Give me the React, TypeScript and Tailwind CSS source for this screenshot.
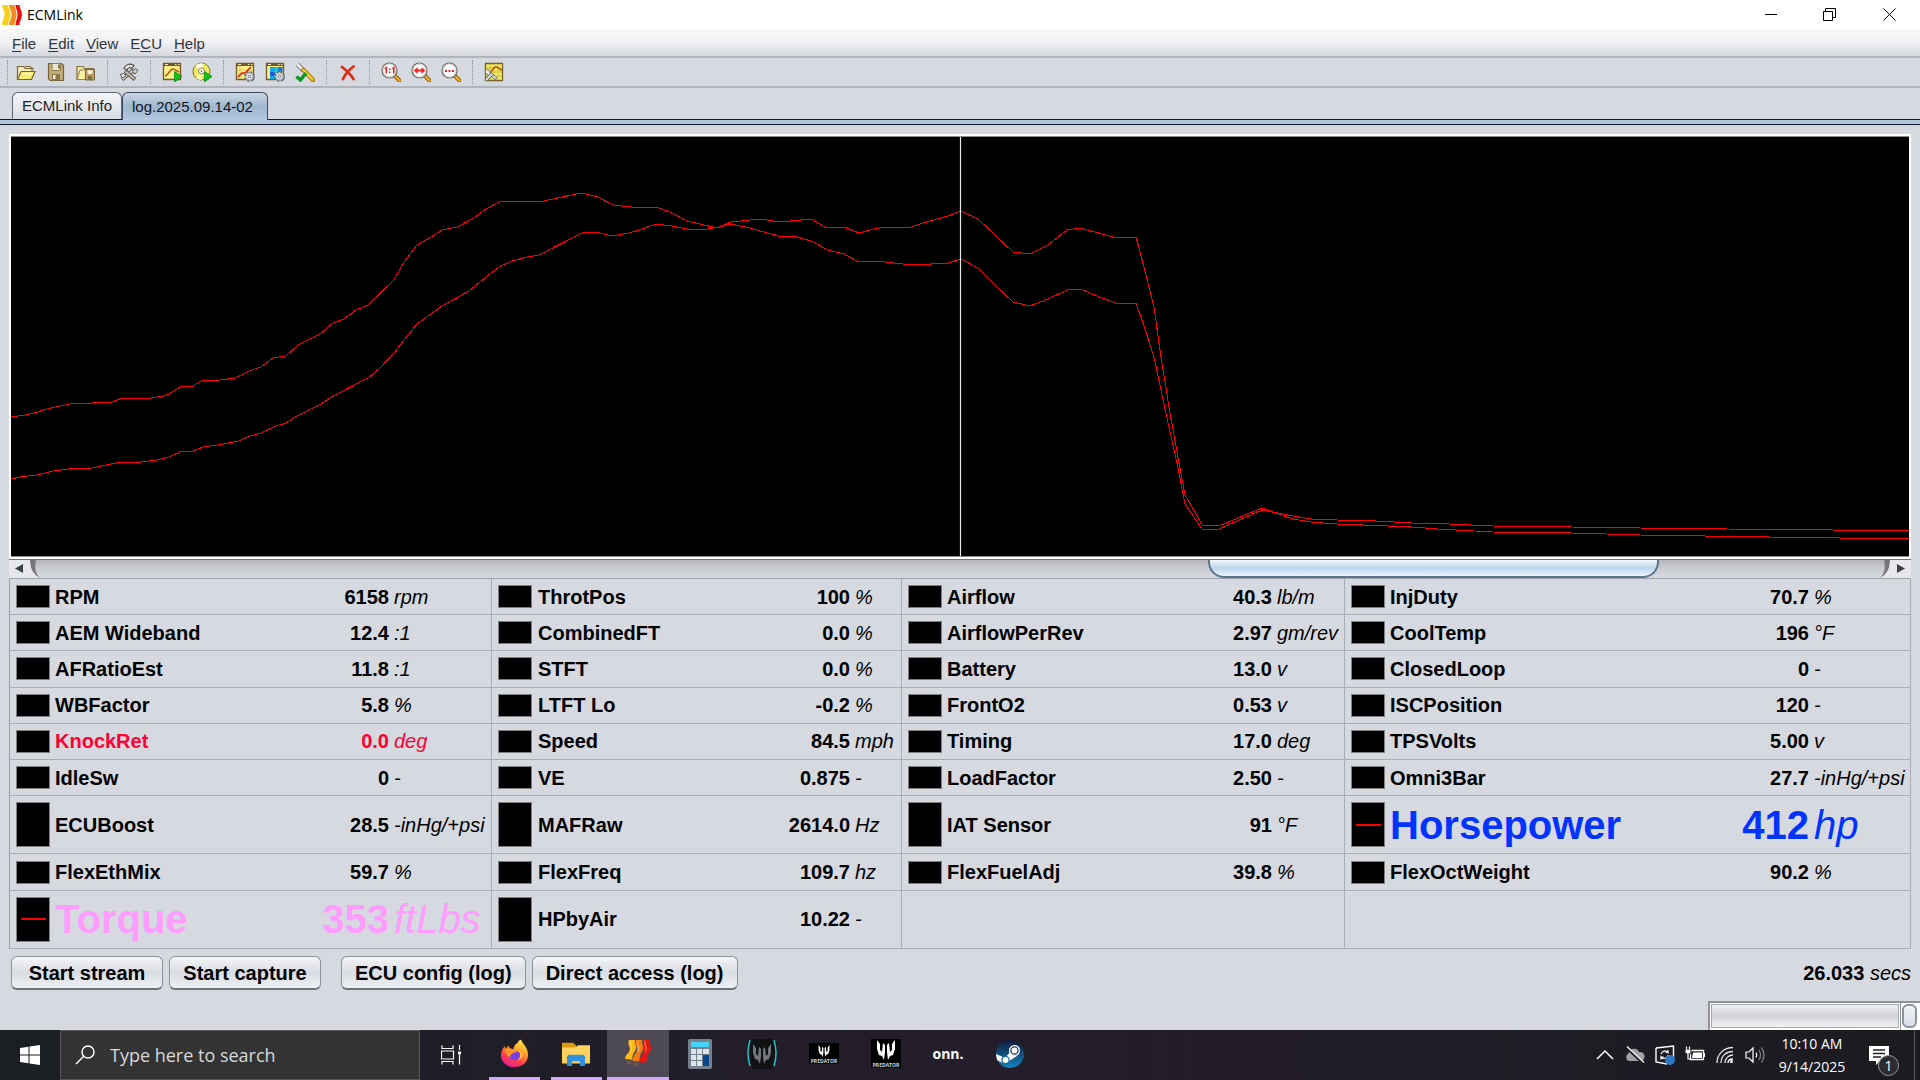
import type { ReactNode } from "react";
import clsx from "clsx";

type Reading = {
    name: string;
    value: string;
    unit: string;
    tone?: "alert" | "torque" | "power";
};

type Trace = [number, number][];

const MENUS = [
    { before: "", key: "F", after: "ile" },
    { before: "", key: "E", after: "dit" },
    { before: "", key: "V", after: "iew" },
    { before: "E", key: "C", after: "U" },
    { before: "", key: "H", after: "elp" },
];

const ROWS: { tall?: boolean; cells: (Reading | null)[] }[] = [
    {
        cells: [
            { name: "RPM", value: "6158", unit: "rpm" },
            { name: "ThrotPos", value: "100", unit: "%" },
            { name: "Airflow", value: "40.3", unit: "lb/m" },
            { name: "InjDuty", value: "70.7", unit: "%" },
        ],
    },
    {
        cells: [
            { name: "AEM Wideband", value: "12.4", unit: ":1" },
            { name: "CombinedFT", value: "0.0", unit: "%" },
            { name: "AirflowPerRev", value: "2.97", unit: "gm/rev" },
            { name: "CoolTemp", value: "196", unit: "°F" },
        ],
    },
    {
        cells: [
            { name: "AFRatioEst", value: "11.8", unit: ":1" },
            { name: "STFT", value: "0.0", unit: "%" },
            { name: "Battery", value: "13.0", unit: "v" },
            { name: "ClosedLoop", value: "0", unit: "-" },
        ],
    },
    {
        cells: [
            { name: "WBFactor", value: "5.8", unit: "%" },
            { name: "LTFT Lo", value: "-0.2", unit: "%" },
            { name: "FrontO2", value: "0.53", unit: "v" },
            { name: "ISCPosition", value: "120", unit: "-" },
        ],
    },
    {
        cells: [
            { name: "KnockRet", value: "0.0", unit: "deg", tone: "alert" },
            { name: "Speed", value: "84.5", unit: "mph" },
            { name: "Timing", value: "17.0", unit: "deg" },
            { name: "TPSVolts", value: "5.00", unit: "v" },
        ],
    },
    {
        cells: [
            { name: "IdleSw", value: "0", unit: "-" },
            { name: "VE", value: "0.875", unit: "-" },
            { name: "LoadFactor", value: "2.50", unit: "-" },
            { name: "Omni3Bar", value: "27.7", unit: "-inHg/+psi" },
        ],
    },
    {
        tall: true,
        cells: [
            { name: "ECUBoost", value: "28.5", unit: "-inHg/+psi" },
            { name: "MAFRaw", value: "2614.0", unit: "Hz" },
            { name: "IAT Sensor", value: "91", unit: "°F" },
            { name: "Horsepower", value: "412", unit: "hp", tone: "power" },
        ],
    },
    {
        cells: [
            { name: "FlexEthMix", value: "59.7", unit: "%" },
            { name: "FlexFreq", value: "109.7", unit: "hz" },
            { name: "FlexFuelAdj", value: "39.8", unit: "%" },
            { name: "FlexOctWeight", value: "90.2", unit: "%" },
        ],
    },
    {
        tall: true,
        cells: [
            { name: "Torque", value: "353", unit: "ftLbs", tone: "torque" },
            { name: "HPbyAir", value: "10.22", unit: "-" },
            null,
            null,
        ],
    },
];

const TRACE_TORQUE: Trace = [
    [11, 417], [25, 415], [38, 412], [43, 410], [55, 407], [65, 405], [76, 403], [86, 404], [98, 402], [112, 402],
    [122, 398], [130, 399], [151, 398], [163, 396], [169, 394], [180, 387], [193, 386], [203, 380], [220, 380], [235, 378],
    [249, 371], [261, 367], [273, 358], [286, 356], [298, 345], [320, 334], [333, 323], [344, 319], [356, 310], [368, 305],
    [394, 280], [404, 262], [417, 245], [431, 237], [442, 230], [457, 227], [474, 218], [486, 209], [499, 202], [508, 201],
    [531, 201], [539, 202], [553, 199], [571, 195], [582, 193], [598, 197], [613, 205], [640, 208], [656, 207], [670, 212],
    [687, 221], [717, 228], [729, 224], [746, 227], [778, 236], [797, 237], [811, 241], [828, 250], [844, 254], [859, 262],
    [876, 261], [903, 264], [931, 264], [948, 263], [961, 259], [978, 268], [995, 285], [1013, 302], [1030, 306], [1048, 299],
    [1067, 290], [1081, 289], [1099, 297], [1116, 303], [1136, 303], [1143, 323], [1154, 357], [1167, 418], [1177, 463],
    [1185, 504], [1202, 529], [1219, 529], [1262, 510], [1293, 516], [1311, 519], [1337, 520], [1376, 521], [1412, 523],
    [1449, 524], [1493, 526], [1572, 527], [1640, 528], [1727, 529], [1833, 530], [1909, 531],
];

const TRACE_POWER: Trace = [
    [11, 479], [20, 477], [37, 475], [53, 471], [76, 468], [92, 468], [106, 465], [121, 462], [141, 462], [157, 460],
    [169, 457], [180, 452], [193, 451], [203, 447], [218, 445], [239, 441], [250, 436], [261, 433], [276, 426], [286, 423],
    [297, 416], [321, 404], [333, 396], [368, 378], [380, 368], [394, 353], [404, 340], [417, 324], [442, 306], [469, 291],
    [486, 277], [499, 267], [512, 261], [527, 257], [539, 255], [582, 233], [596, 232], [612, 236], [629, 233], [642, 229],
    [656, 224], [672, 226], [687, 229], [707, 229], [719, 227], [731, 222], [760, 219], [780, 222], [811, 219], [825, 227],
    [844, 227], [859, 233], [874, 229], [884, 227], [911, 227], [923, 223], [948, 216], [961, 211], [978, 219], [995, 235],
    [1013, 252], [1030, 254], [1048, 245], [1067, 230], [1079, 228], [1099, 233], [1116, 238], [1136, 237], [1144, 267],
    [1154, 307], [1161, 357], [1170, 413], [1179, 463], [1185, 495], [1194, 510], [1202, 525], [1219, 526], [1262, 508],
    [1293, 519], [1311, 522], [1337, 524], [1364, 525], [1412, 527], [1437, 529], [1493, 532], [1572, 533], [1640, 535],
    [1769, 537], [1909, 539],
];

// visible window of the log, as fractions of the whole recording
const SCROLL = { start: 0.635, size: 0.245 };

function Icon({ size = 20, children }: { size?: number; children: ReactNode }) {
    return (
        <svg width={size} height={size} viewBox={`0 0 ${size} ${size}`} fill="none" aria-hidden="true">
            {children}
        </svg>
    );
}

/* ---------- toolbar icons ---------- */

function OpenIcon() {
    return (
        <Icon>
            <path d="M1.5 17.5V4.5h6l1.5 2h7v3" fill="#f2edc4" stroke="#7a6631" strokeWidth="1.2" />
            <path d="M1.5 17.5L5 9.500h14l-3.500 8z" fill="#f7ec72" stroke="#7d6526" strokeWidth="1.2" />
            <path d="M6.500 10.800h10.500l-.7 1.600H6z" fill="#fdf8ba" />
            <path d="M9 4.500h5l4 2.500" stroke="#7d6a35" />
        </Icon>
    );
}

function SaveIcon() {
    return (
        <Icon>
            <path d="M2.500 1.500h13l2 2v15H4l-1.500-2z" fill="#c2ac78" stroke="#75623a" strokeWidth="1.2" />
            <path d="M6 1.500h8.500v7H6z" fill="#e9e4d2" stroke="#8f7c4e" />
            <path d="M6 12h8v6.500H6z" fill="#8b7748" />
            <path d="M7 13h2.500v4H7z" fill="#f3efe0" />
            <path d="M12 2.500h2v4h-2z" fill="#8b7748" />
        </Icon>
    );
}

function SaveAsIcon() {
    return (
        <Icon>
            <path d="M1 17.500V4.500h6l1.500 2h9v11z" fill="#efe6ad" stroke="#85703a" strokeWidth="1.2" />
            <path d="M1 17.500L4 8h9l-2 9.500z" fill="#f8efa0" stroke="#9a8448" />
            <path d="M9.500 7.500h9v10.500h-9z" fill="#b9a066" stroke="#75623a" />
            <path d="M11.500 8h5v4h-5z" fill="#f0ecdd" />
            <path d="M12 14h4v4h-4z" fill="#806d42" />
        </Icon>
    );
}

function ToolsIcon() {
    return (
        <Icon>
            <path d="M3 17.500L14.500 8" stroke="#555" strokeWidth="4" />
            <path d="M3.500 17L14 8.500" stroke="#e3ddd2" strokeWidth="2" />
            <path d="M6 9l10 8.500" stroke="#555" strokeWidth="4" />
            <path d="M6.500 9.500L15.500 17" stroke="#c6bfae" strokeWidth="2" />
            <path d="M5 6.500C6 2.500 11 .8 15 3.500l-2 3c-2-1.500-4-1-5 1.500z" fill="#e9e7e2" stroke="#555" strokeWidth="1.200" />
            <path d="M13 9.500l3.500-3 2.500 2-3 3.500z" fill="#d0cbc0" stroke="#555" />
            <path d="M1 12.500l4-1 2 2.500-3.500 1.500z" fill="#f0efec" stroke="#555" />
        </Icon>
    );
}

function ChartBase() {
    return (
        <>
            <path d="M1.500 1.500h17v16h-17z" fill="#f8ef86" stroke="#73592a" strokeWidth="1.300" />
            <path d="M1 1h18v3H1z" fill="#73592a" />
            <path d="M3 2.500h3M13 2.500h1.500M16 2.500h1.500" stroke="#f6e9b8" />
        </>
    );
}

function PlayBadge() {
    return <path d="M12.500 9.500l7.500 5-7.500 5.500z" fill="#0ec41b" stroke="#088a12" strokeWidth=".8" />;
}

function GearBadge() {
    return (
        <>
            <circle cx="14.500" cy="14.500" r="4.300" fill="#eceff2" stroke="#6a727b" strokeWidth="2.200" strokeDasharray="2 1.400" />
            <circle cx="14.500" cy="14.500" r="3.600" fill="#eceff2" stroke="#949ca5" />
            <circle cx="14.500" cy="14.500" r="1.300" fill="#fff" stroke="#666e77" />
        </>
    );
}

function StreamIcon() {
    return (
        <Icon>
            <ChartBase />
            <path d="M3 14c4-1 4-6 7.500-7 3-.5 4 3 7 3" stroke="#b8501a" strokeWidth="1.600" />
            <PlayBadge />
        </Icon>
    );
}

function DiscIcon() {
    return (
        <Icon>
            <circle cx="9.500" cy="9.500" r="8.500" fill="#f3ea62" stroke="#77703a" />
            <path d="M9.500 9.500L3 4a8.500 8.500 0 0 1 8-2.500z" fill="#fffde2" />
            <path d="M9.500 9.500L4 16a8.500 8.500 0 0 0 6 2z" fill="#fbf7b4" />
            <circle cx="9.500" cy="9" r="3" fill="#fff" stroke="#8f8850" />
            <circle cx="9.500" cy="9" r="1" fill="#8f8850" />
            <PlayBadge />
        </Icon>
    );
}

function ChartSetupIcon() {
    return (
        <Icon>
            <ChartBase />
            <path d="M5 4v13M1.500 8h16M1.500 12.500h16" stroke="#d6bf55" strokeWidth=".8" />
            <path d="M3 15l4-4 3 0 6-6" stroke="#e01515" strokeWidth="1.500" />
            <GearBadge />
        </Icon>
    );
}

function TableSetupIcon() {
    return (
        <Icon>
            <ChartBase />
            <path d="M5 5h5v12H5z" fill="#11a9e6" />
            <path d="M10 5h3v6h-3z" fill="#1bd0c4" />
            <path d="M13 5h4.500v5H13z" fill="#1e78d2" />
            <path d="M5 10h5v4H5z" fill="#1e5fd0" />
            <GearBadge />
        </Icon>
    );
}

function ProbeIcon() {
    return (
        <Icon>
            <path d="M2.500 2.500l6 6" stroke="#6f6f6f" strokeWidth="4.500" />
            <path d="M2.500 2.500l6 6" stroke="#fff" strokeWidth="2.500" />
            <path d="M8.500 8l9.500 10" stroke="#a87a10" strokeWidth="4.500" strokeLinecap="round" />
            <path d="M8.500 8l9 9.500" stroke="#f7cf37" strokeWidth="2.500" strokeLinecap="round" />
            <path d="M1.500 14.500l4 3.500 5.500-7" stroke="#0b9a1b" strokeWidth="3.500" />
        </Icon>
    );
}

function DeleteIcon() {
    return (
        <Icon>
            <path d="M4 5c4 3 9 8 11.500 12M15.500 4.500c-4 3-8 7-10.500 12.500" stroke="#dd2d14" strokeWidth="2.800" strokeLinecap="round" />
        </Icon>
    );
}

function Magnifier({ children }: { children: ReactNode }) {
    return (
        <Icon>
            <path d="M13.500 13.500l5 5" stroke="#8c5a0c" strokeWidth="4" strokeLinecap="round" />
            <path d="M13.500 13.500l5 5" stroke="#f5b022" strokeWidth="2.200" strokeLinecap="round" />
            <circle cx="8.500" cy="8.500" r="7.500" fill="#fff" stroke="#6e6963" strokeWidth="1.200" />
            <circle cx="8.500" cy="8.500" r="6.300" stroke="#d6d3ce" />
            {children}
        </Icon>
    );
}

function ZoomActualIcon() {
    return (
        <Magnifier>
            <path d="M3.800 6.600l1.500-1v6M11.300 6.600l1.500-1v6" stroke="#ee1c1c" strokeWidth="1.500" />
            <path d="M8 6.500h1.500V8H8zM8 9.500h1.500V11H8z" fill="#ee1c1c" />
        </Magnifier>
    );
}

function ZoomFitIcon() {
    return (
        <Magnifier>
            <path d="M2.800 8.500L6.500 5v2.500h4V5l3.700 3.500L10.500 12V9.500h-4V12z" fill="#f02222" />
        </Magnifier>
    );
}

function ZoomRangeIcon() {
    return (
        <Magnifier>
            <path d="M4 8h2v2H4zM7.500 8h2v2h-2zM11 8h2v2h-2z" fill="#f02222" />
        </Magnifier>
    );
}

function CalibrateIcon() {
    return (
        <Icon>
            <path d="M1.500 1.500h17v17h-17z" fill="#f9ed60" stroke="#75642a" strokeWidth="1.300" />
            <path d="M6 2v16M10 2v16M14 2v16M2 6h16M2 10h16M2 14h16" stroke="#c2b440" strokeWidth=".8" />
            <path d="M3 11h3c2 0 2-6 6-6s3 3 6 3" stroke="#b8501a" strokeWidth="1.600" />
            <path d="M1 8.500c2-2 5-.5 5 2l4 3c2 0 3 2 2 4l-2.500-1-3-3.500-2 .5-3-2.500z" fill="#e4e6e8" stroke="#666" strokeWidth=".9" />
            <path d="M2 18l6-6" stroke="#555" strokeWidth="3.500" />
            <path d="M2 18l6-6" stroke="#e4e6e8" strokeWidth="1.800" />
        </Icon>
    );
}

const TOOLS: { label: string; icon: ReactNode }[][] = [
    [
        { label: "Open log", icon: <OpenIcon /> },
        { label: "Save log", icon: <SaveIcon /> },
        { label: "Save as", icon: <SaveAsIcon /> },
    ],
    [{ label: "Options", icon: <ToolsIcon /> }],
    [
        { label: "Stream", icon: <StreamIcon /> },
        { label: "Capture", icon: <DiscIcon /> },
    ],
    [
        { label: "ECU config", icon: <ChartSetupIcon /> },
        { label: "Direct access", icon: <TableSetupIcon /> },
        { label: "Check values", icon: <ProbeIcon /> },
    ],
    [{ label: "Delete", icon: <DeleteIcon /> }],
    [
        { label: "Zoom 1:1", icon: <ZoomActualIcon /> },
        { label: "Zoom to fit", icon: <ZoomFitIcon /> },
        { label: "Zoom range", icon: <ZoomRangeIcon /> },
    ],
    [{ label: "Calibrate", icon: <CalibrateIcon /> }],
];

/* ---------- window chrome ---------- */

function AppLogo() {
    return (
        <Icon>
            <path d="M0 0h6c0 3 2.500 5 2.500 9.500S6 16 6 20H0c0-4 2.500-6 2.500-10.500S0 3 0 0z" fill="#f7d01d" />
            <path d="M7 0h5.500c0 3 2 5 2 9.500s-2 6.500-2 10.500H7c0-4 2.500-6 2.500-10.500S7 3 7 0z" fill="#f58a20" />
            <path d="M13.500 0h4c0 3 2.500 5.500 2.500 9.500S17.500 16 17.500 20h-4c0-4 2-6 2-10.500s-2-6.500-2-9.500z" fill="#ed1010" />
        </Icon>
    );
}

function TitleBar() {
    return (
        <header className="flex h-[29px] shrink-0 items-center justify-between bg-white pl-[2px]">
            <div className="flex items-center gap-[5px]">
                <AppLogo />
                <h1 className="font-['Open_Sans',sans-serif] text-[14px] leading-5 text-black">ECMLink</h1>
            </div>
            <div className="flex">
                <button type="button" aria-label="Minimize" className="flex h-[29px] w-[58px] items-center justify-center">
                    <Icon size={13}>
                        <path d="M0 6.500h12" stroke="#000" />
                    </Icon>
                </button>
                <button type="button" aria-label="Restore" className="flex h-[29px] w-[58px] items-center justify-center">
                    <Icon size={13}>
                        <path d="M.5 3.500h9v9h-9zM2.500 3.500v-3h10v9h-3" stroke="#000" />
                    </Icon>
                </button>
                <button type="button" aria-label="Close" className="flex h-[29px] w-[62px] items-center justify-center">
                    <Icon size={13}>
                        <path d="M.5.5l12 12M12.500.5l-12 12" stroke="#000" />
                    </Icon>
                </button>
            </div>
        </header>
    );
}

function MenuBar() {
    return (
        <nav className="flex h-[29px] shrink-0 items-center gap-3 border-b-2 border-[#b0b4bd] bg-gradient-to-b from-[#f8f8f9] via-[#f0f1f3] to-[#d4d7de] pt-[2px] pl-3">
            {MENUS.map((menu) => (
                <button key={menu.key} type="button" className="text-[15px] leading-5 text-[#30343b]">
                    {menu.before}
                    <u className="underline-offset-2">{menu.key}</u>
                    {menu.after}
                </button>
            ))}
        </nav>
    );
}

function Toolbar() {
    return (
        <div role="toolbar" className="flex h-[30px] shrink-0 items-center border-b-2 border-[#b0b4bd] pl-1">
            {TOOLS.map((group, i) => (
                <div key={i} className="flex items-center">
                    <div className={clsx("flex justify-center", i === 0 ? "w-[7px]" : "w-[13px]")}>
                        <div className="h-[24px] border-l border-dotted border-[#8d929c]" />
                    </div>
                    {group.map((tool) => (
                        <button
                            key={tool.label}
                            type="button"
                            aria-label={tool.label}
                            className="flex h-[28px] w-[30px] items-center justify-center"
                        >
                            {tool.icon}
                        </button>
                    ))}
                </div>
            ))}
        </div>
    );
}

function Tabs() {
    return (
        <div className="shrink-0">
            <div role="tablist" className="flex items-end pt-1 pl-3">
                <button
                    type="button"
                    role="tab"
                    aria-selected="false"
                    className="h-[27px] w-[110px] rounded-t-md border border-b-0 border-[#5e6470] bg-gradient-to-b from-[#f4f5f8] to-[#d9dce3] pl-[9px] text-left text-[15px] leading-5 whitespace-nowrap text-[#1c1f26]"
                >
                    ECMLink Info
                </button>
                <button
                    type="button"
                    role="tab"
                    aria-selected="true"
                    className="relative -mb-px h-[28px] w-[146px] rounded-t-md border border-b-0 border-[#3d4b5e] bg-gradient-to-b from-[#c9d6e3] via-[#9fb8cf] to-[#b4c8de] pl-[9px] text-left text-[15px] leading-5 whitespace-nowrap text-[#10141c]"
                >
                    log.2025.09.14-02
                </button>
            </div>
            <div className="h-[6px] border-y border-[#10162a] bg-[#b3c6e0]" />
        </div>
    );
}

/* ---------- log view ---------- */

function LogChart() {
    return (
        <div className="min-h-[200px] flex-1 border-2 border-white bg-black">
            <svg
                className="block h-full w-full border-y border-[#8b8b8b]"
                viewBox="11 137 1898 419"
                preserveAspectRatio="none"
                fill="none"
                role="img"
                aria-label="Horsepower and torque over time"
            >
                {[TRACE_TORQUE, TRACE_POWER].map((trace, i) => (
                    <polyline
                        key={i}
                        points={trace.map(([x, y]) => `${x},${y}`).join(" ")}
                        stroke="#ff0000"
                        strokeWidth="1"
                        shapeRendering="crispEdges"
                        vectorEffect="non-scaling-stroke"
                    />
                ))}
                <path d="M960.500 130v440" stroke="#e8e8e8" strokeWidth="1.200" vectorEffect="non-scaling-stroke" />
            </svg>
        </div>
    );
}

function ScrollBar() {
    return (
        <div className="flex h-[19px] shrink-0 border-t border-[#6f7176] bg-gradient-to-b from-[#b4b6bb] via-[#cbcdd2] to-[#d6d9df]">
            <button type="button" aria-label="Scroll left" className="w-[31px]">
                <svg width="31" height="18" viewBox="0 0 31 18" aria-hidden="true">
                    <path d="M21 0h6c-2 8 0 14 4 18C24 15 21 8 21 0z" fill="#55575c" opacity=".7" />
                    <path d="M0 0h21c0 8 3 15 10 18H0z" fill="#e6e8eb" />
                    <path d="M14 4v9L6 8.500z" fill="#3b3e44" />
                </svg>
            </button>
            <div className="flex flex-1">
                <div
                    role="scrollbar"
                    aria-controls="log-values"
                    aria-orientation="horizontal"
                    aria-valuenow={Math.round(SCROLL.start * 100)}
                    className="rounded-b-[16px] border-2 border-t-0 border-[#5c7690] bg-gradient-to-b from-[#f4f8fc] via-[#bdd6ec] to-[#e9f6ff]"
                    style={{ marginLeft: `${SCROLL.start * 100}%`, width: `${SCROLL.size * 100}%` }}
                />
            </div>
            <button type="button" aria-label="Scroll right" className="w-[31px]">
                <svg width="31" height="18" viewBox="0 0 31 18" aria-hidden="true">
                    <path d="M10 0H4c2 8 0 14-4 18C7 15 10 8 10 0z" fill="#55575c" opacity=".7" />
                    <path d="M31 0H10c0 8-3 15-10 18h31z" fill="#e6e8eb" />
                    <path d="M17 4v9l8-4.500z" fill="#3b3e44" />
                </svg>
            </button>
        </div>
    );
}

function ReadingCells({ reading, tall }: { reading: Reading | null; tall?: boolean }) {
    const line = "border-b border-[#a9adb6]";

    if (!reading) {
        return <td colSpan={4} className={clsx(line, "border-r")} />;
    }

    const big = reading.tone === "torque" || reading.tone === "power";
    const text = clsx(
        line,
        "whitespace-nowrap",
        big ? "text-[40px] leading-[44px]" : "text-[20px] leading-6",
        reading.tone === "alert" && "text-[#ff0033]",
        reading.tone === "torque" && "text-[#ff9cff]",
        reading.tone === "power" && "text-[#0033ff]"
    );

    return (
        <>
            <td className={clsx(line, "pl-[6px]")}>
                <div
                    className={clsx(
                        "flex w-[34px] items-center justify-center border border-[#808080] bg-black",
                        tall ? "h-[45px]" : "h-[23px]"
                    )}
                >
                    {big && <div className="h-[2px] w-[25px] bg-[#ff0000]" />}
                </div>
            </td>
            <th scope="row" className={clsx(text, "text-left font-bold")}>
                {reading.name}
            </th>
            <td className={clsx(text, "text-right font-bold")}>{reading.value}</td>
            <td className={clsx(text, "border-r pl-[5px] italic")}>{reading.unit}</td>
        </>
    );
}

function ReadingsTable() {
    return (
        <table
            id="log-values"
            className="h-[371px] w-full shrink-0 table-fixed border-separate border-spacing-0 border-t border-l border-[#9da1aa] text-black"
        >
            <colgroup>
                <col className="w-[45px]" />
                <col className="w-[214px]" />
                <col className="w-[120px]" />
                <col className="w-[103px]" />
                <col className="w-[46px]" />
                <col className="w-[192px]" />
                <col className="w-[120px]" />
                <col className="w-[52px]" />
                <col className="w-[45px]" />
                <col className="w-[205px]" />
                <col className="w-[120px]" />
                <col className="w-[73px]" />
                <col className="w-[45px]" />
                <col />
                <col className="w-[120px]" />
                <col className="w-[102px]" />
            </colgroup>
            <tbody>
                {ROWS.map((row, i) => (
                    <tr key={i} className={row.tall ? "h-[58px]" : "h-[36px]"}>
                        {row.cells.map((reading, j) => (
                            <ReadingCells key={j} reading={reading} tall={row.tall} />
                        ))}
                    </tr>
                ))}
            </tbody>
        </table>
    );
}

function PanelButton({ children }: { children: ReactNode }) {
    return (
        <button
            type="button"
            className="h-[34px] min-w-[152px] rounded-md border border-b-2 border-[#8e929b] border-b-[#6d7179] bg-gradient-to-b from-[#f5f6f8] via-[#d9dce2] to-[#eef0f4] px-[13px] text-[20px] leading-6 font-bold whitespace-nowrap text-black"
        >
            {children}
        </button>
    );
}

function ActionBar() {
    return (
        <div className="flex shrink-0 items-center justify-between pt-[7px] pl-[2px]">
            <div className="flex gap-5">
                <div className="flex gap-[6px]">
                    <PanelButton>Start stream</PanelButton>
                    <PanelButton>Start capture</PanelButton>
                </div>
                <div className="flex gap-[6px]">
                    <PanelButton>ECU config (log)</PanelButton>
                    <PanelButton>Direct access (log)</PanelButton>
                </div>
            </div>
            <p className="text-[20px] leading-6 text-black">
                <b>26.033</b> <i>secs</i>
            </p>
        </div>
    );
}

function StatusBar() {
    return (
        <div className="flex h-[29px] shrink-0 justify-end">
            <div className="w-[192px] border-t-2 border-l-2 border-[#8f9298] bg-white p-px pb-[2px]">
                <div className="h-full border border-[#a5a8ae] bg-gradient-to-b from-[#f0f0f2] via-[#d0d2d6] to-[#f4f4f6]" />
            </div>
            <div className="w-[20px] border-t-2 border-l border-[#8f9298] bg-white p-px pb-[2px]">
                <button
                    type="button"
                    aria-label="Collect garbage"
                    className="block h-full w-[15px] rounded-md border-2 border-[#8b919d] bg-gradient-to-b from-[#f3f4f7] to-[#d9dde5]"
                />
            </div>
        </div>
    );
}

/* ---------- taskbar ---------- */

function FirefoxIcon() {
    return (
        <svg width="29" height="29" viewBox="0 0 30 36" preserveAspectRatio="none" aria-hidden="true">
            <defs>
                <linearGradient id="fx" x1="0.800" y1="0" x2="0.300" y2="1">
                    <stop offset="0" stopColor="#fff044" />
                    <stop offset=".4" stopColor="#ff9a28" />
                    <stop offset=".7" stopColor="#ff3f4c" />
                    <stop offset="1" stopColor="#e3199b" />
                </linearGradient>
            </defs>
            <path d="M18 5c1-2 2-4 4-4 0 4 7 8 7 19 0 9-6 15-14 15S1 29 1 20c0-5 2-9 4-11l1 3 3-4 1 4c2 0 3 0 4 1 0-3 1-6 4-8z" fill="url(#fx)" />
            <circle cx="15" cy="20.500" r="6" fill="#7a3ee0" />
            <path d="M5 13c3-2 8-1 10 1l3 2c-3 0-4 1-5 2-2 1-3 3-2 5-3-1-6-5-6-10z" fill="#ff9428" />
            <path d="M18 14c4 3 4 9 0 12 6-1 8-9 0-12z" fill="#ffbd33" />
        </svg>
    );
}

function ExplorerIcon() {
    return (
        <svg width="28" height="24" viewBox="0 0 28 30" preserveAspectRatio="none" aria-hidden="true">
            <path d="M0 1h11l3 3v5H0z" fill="#d99a12" />
            <path d="M0 7h13l3-3h12v23H0z" fill="#ffd260" />
            <path d="M5 30V19q0-3 3-3h12q3 0 3 3v11h-5v-6h-8v6z" fill="#3190dd" />
        </svg>
    );
}

function EcmLinkIcon() {
    return (
        <svg width="30" height="29" viewBox="0 0 30 32" aria-hidden="true">
            <path d="M5 1h7c-2 5 3 6 0 12-2 4-4 5-3 10l-8-1c-1-5 5-6 5-11 0-4-3-5-1-10z" fill="#fcb813" />
            <path d="M13 1h7c-2 5 3 6 0 12-2 4-4 6-3 12l-8-1c0-6 5-8 5-13 0-4-3-5-1-10z" fill="#f47b14" />
            <path d="M21 1h7c-2 5 4 7 0 13-3 4-3 7-4 12h-8c0-6 6-9 6-14 0-4-3-6-1-11z" fill="#e8150f" />
            <path d="M7 2c-2 5 3 6 0 12M15 2c-2 5 3 6 0 12M23 2c-2 5 3 6 0 12" stroke="#ffe9a0" fill="none" opacity=".7" />
            <path d="M1 24l8 1-3 4zM9 26l7 1-3 4z" fill="#f47b14" opacity=".3" />
        </svg>
    );
}

function CalculatorIcon() {
    return (
        <svg width="24" height="30" viewBox="0 0 24 30" aria-hidden="true">
            <rect width="24" height="30" rx="2" fill="#75828e" />
            <rect x="3" y="3" width="18" height="5" fill="#43d3fb" />
            <path d="M3 10h5v5H3zM9 10h5v5H9zM15 10h6v5h-6zM3 16h5v5H3zM9 16h5v5H9zM3 22h5v5H3zM9 22h5v5H9z" fill="#dbe3ec" />
            <path d="M15 16h6v11h-6z" fill="#0a4a8c" />
        </svg>
    );
}

function PredatorMark({ fill }: { fill: string }) {
    return (
        <>
            <path d="M1 0l3 4v6l2 2 1-9 2 2v7l-1 8-2-4-3-1-2-6z" fill={fill} />
            <path d="M19 0l-3 4v6l-2 2-1-9-2 2v7l1 8 2-4 3-1 2-6z" fill={fill} />
        </>
    );
}

function PredatorSenseIcon() {
    return (
        <svg width="30" height="30" viewBox="0 0 30 30" aria-hidden="true">
            <path d="M4 0h22l4 4-2 20-4 6H6l-4-6L0 4z" fill="#111214" />
            <path d="M3 1Q-1 14 3 27M27 1q4 13 0 26" stroke="#1fc3cc" strokeWidth="1.500" fill="none" />
            <g transform="translate(5 5)">
                <PredatorMark fill="#74777a" />
            </g>
        </svg>
    );
}

function PredatorIcon({ small }: { small?: boolean }) {
    return small ? (
        <svg width="30" height="21" viewBox="0 0 30 21" aria-hidden="true">
            <path d="M0 0h30v21H0z" fill="#000" />
            <g transform="translate(9 2) scale(.6)">
                <PredatorMark fill="#fff" />
            </g>
            <text x="15" y="19.500" textAnchor="middle" fontSize="5" fontWeight="700" fill="#ddd">PREDATOR</text>
        </svg>
    ) : (
        <svg width="30" height="29" viewBox="0 0 30 29" aria-hidden="true">
            <path d="M0 0h30v29H0z" fill="#000" />
            <g transform="translate(5 1)">
                <PredatorMark fill="#fff" />
            </g>
            <text x="15" y="27.500" textAnchor="middle" fontSize="5" fontWeight="700" fill="#ddd">PREDATOR</text>
        </svg>
    );
}

function SteamIcon() {
    return (
        <svg width="28" height="28" viewBox="0 0 28 28" aria-hidden="true">
            <defs>
                <linearGradient id="steam" x1="0" y1="0" x2="0" y2="1">
                    <stop offset="0" stopColor="#10193a" />
                    <stop offset="1" stopColor="#1484bd" />
                </linearGradient>
            </defs>
            <circle cx="14" cy="14" r="14" fill="url(#steam)" />
            <path d="M0 14l9 4 6-7 6 5-8 5-4 3-8-4z" fill="#fff" />
            <circle cx="18.500" cy="10.500" r="5.500" fill="#fff" />
            <circle cx="18.500" cy="10.500" r="3.600" fill="none" stroke="#1a3a66" strokeWidth="1.300" />
            <circle cx="9.500" cy="20" r="3.600" fill="#fff" stroke="#16679b" strokeWidth="1.200" />
        </svg>
    );
}

const APPS: { label: string; icon: ReactNode; state?: "open" | "active" }[] = [
    { label: "Firefox", icon: <FirefoxIcon />, state: "open" },
    { label: "File Explorer", icon: <ExplorerIcon />, state: "open" },
    { label: "ECMLink", icon: <EcmLinkIcon />, state: "active" },
    { label: "Calculator", icon: <CalculatorIcon /> },
    { label: "PredatorSense", icon: <PredatorSenseIcon /> },
    { label: "Predator", icon: <PredatorIcon small /> },
    { label: "Predator service", icon: <PredatorIcon /> },
    { label: "onn.", icon: <span className="font-['Open_Sans',sans-serif] text-[14px] leading-5 font-bold text-white">onn.</span> },
    { label: "Steam", icon: <SteamIcon /> },
];

function TrayIcons() {
    return (
        <div className="flex">
            <button type="button" aria-label="Show hidden icons" className="flex w-[30px] justify-center">
                <Icon size={20}>
                    <path d="M2 14l8-8 8 8" stroke="#fff" strokeWidth="1.500" />
                </Icon>
            </button>
            <button type="button" aria-label="OneDrive" className="flex w-[30px] justify-center">
                <Icon size={20}>
                    <path d="M4 16a4 4 0 0 1-.5-7.500A5.500 5.500 0 0 1 14 7a4.500 4.500 0 0 1 2 9z" fill="#a0a0a0" />
                    <path d="M1 2l17 16" stroke="#1d1d22" strokeWidth="3" />
                    <path d="M2 1.500l17 16" stroke="#fff" strokeWidth="1.300" />
                </Icon>
            </button>
            <button type="button" aria-label="Windows Update" className="flex w-[30px] justify-center">
                <Icon size={20}>
                    <path d="M1 3l17.500-2v11M1 3v14l11 2" stroke="#fff" strokeWidth="1.400" />
                    <path d="M6 9a4 4 0 0 1 7-1.500V5M13 7.500h-2.500M13 10a4 4 0 0 1-7 2v2.500M6 12h2.500" stroke="#fff" strokeWidth="1.200" />
                    <circle cx="15" cy="15" r="5" fill="#2f78c4" />
                </Icon>
            </button>
            <button type="button" aria-label="Battery charging" className="flex w-[30px] justify-center">
                <Icon size={20}>
                    <path d="M5.500 5.500h13v9h-13z" stroke="#fff" strokeWidth="1.300" />
                    <path d="M8 7.500h9v5.500H7z" fill="#fff" />
                    <path d="M19 8h1v4h-1z" fill="#fff" />
                    <path d="M0 4h6v4L3 9.500 0 8z" fill="#fff" stroke="#1d1d22" />
                    <path d="M1.500 1.500V4M4.500 1.500V4M3 9v5h3" stroke="#fff" strokeWidth="1.200" />
                </Icon>
            </button>
            <button type="button" aria-label="Wi-Fi" className="flex w-[30px] justify-center">
                <Icon size={20}>
                    <path d="M2 18C2 9 9 2.500 18 2.500M6 18C6 11 11 6.500 18 6.500M10 18c0-5 4-8 8-8" stroke="#e6e6e6" strokeWidth="1.300" />
                    <path d="M13 18c0-2.500 2-4 5-4" stroke="#fff" strokeWidth="1.300" />
                    <circle cx="16.500" cy="16.500" r="1.500" fill="#fff" />
                </Icon>
            </button>
            <button type="button" aria-label="Volume" className="flex w-[30px] justify-center">
                <Icon size={20}>
                    <path d="M1 7h3l4-4v14l-4-4H1z" stroke="#fff" strokeWidth="1.200" />
                    <path d="M11 7.500q1.500 2.500 0 5" stroke="#fff" strokeWidth="1.300" />
                    <path d="M14 5q3 5 0 10M16.500 2.500q5 7.500 0 15" stroke="#85858a" strokeWidth="1.300" />
                </Icon>
            </button>
        </div>
    );
}

function Taskbar() {
    return (
        <footer className="flex h-[50px] shrink-0 items-center bg-gradient-to-r from-[#1b1e23] via-[#241d2b] to-[#1b1b20] font-['Open_Sans',sans-serif] text-white">
            <button type="button" aria-label="Start" className="flex h-full w-[60px] items-center justify-center">
                <Icon size={20}>
                    <path d="M0 3l8.500-1.200v7.700H0zM9.500 1.600L20 0v9.500H9.500zM0 10.500h8.500v7.700L0 17zM9.500 10.500H20V20L9.500 18.400z" fill="#fff" />
                </Icon>
            </button>
            <label className="flex h-full w-[360px] items-center gap-[15px] border border-[#58585a] bg-[#333333] pl-[14px]">
                <Icon size={20}>
                    <circle cx="13" cy="7" r="6" stroke="#fff" strokeWidth="1.400" />
                    <path d="M8.500 11.500L1 19" stroke="#fff" strokeWidth="1.400" />
                </Icon>
                <input
                    type="text"
                    aria-label="Search"
                    placeholder="Type here to search"
                    className="min-w-0 flex-1 bg-transparent text-[18px] leading-6 text-white outline-none placeholder:text-[#d8d8d8]"
                />
            </label>
            <button type="button" aria-label="Task view" className="flex h-full w-[62px] items-center justify-center">
                <Icon size={20}>
                    <path d="M1 .5v3h11v-3M1 19.500v-3h11v3M.5 6h12v8H.5z" stroke="#fff" strokeWidth="1.200" />
                    <path d="M18.500 0v5M18.500 10v9.500" stroke="#fff" strokeWidth="1.200" />
                    <path d="M17 6.500h3v3h-3z" fill="#fff" />
                </Icon>
            </button>
            <div className="flex h-full pl-px">
                {APPS.map((app) => (
                    <button
                        key={app.label}
                        type="button"
                        aria-label={app.label}
                        className={clsx(
                            "flex h-full w-[62px] flex-col items-center",
                            app.state === "active" && "bg-[#4d4a55]"
                        )}
                    >
                        <span className="flex h-[47px] items-center justify-center">{app.icon}</span>
                        {app.state && (
                            <span className={clsx("h-[3px] bg-[#d3aaf8]", app.state === "active" ? "w-full" : "w-[51px]")} />
                        )}
                    </button>
                ))}
            </div>
            <div className="ml-auto flex h-full items-center">
                <TrayIcons />
                <button type="button" className="w-[84px] text-center text-[14px] leading-[23px]">
                    <time className="block">10:10 AM</time>
                    <time className="block">9/14/2025</time>
                </button>
                <button
                    type="button"
                    aria-label="1 new notification"
                    className="relative flex h-full w-[60px] items-center justify-center pr-[10px]"
                >
                    <Icon size={20}>
                        <path d="M0 1h20v15h-9l-4 4v-4H0z" fill="#fff" />
                        <path d="M4 5h12M4 8.500h12M4 12h8" stroke="#222" strokeWidth="1.400" />
                    </Icon>
                    <span className="absolute right-[15px] bottom-[4px] flex h-[21px] w-[21px] items-center justify-center rounded-full border border-[#9a9a9c] bg-[#2b2b30] text-[14px] leading-4">
                        1
                    </span>
                </button>
                <div className="h-full w-[6px] border-l border-[#5b5b60]" />
            </div>
        </footer>
    );
}

export default function App() {
    return (
        <div className="flex h-screen min-h-[860px] flex-col bg-[#d6d9df] font-['Liberation_Sans',Arial,sans-serif]">
            <TitleBar />
            <MenuBar />
            <Toolbar />
            <Tabs />
            <main className="flex min-h-0 flex-1 flex-col px-[9px] pt-[9px] pb-[11px]">
                <LogChart />
                <ScrollBar />
                <ReadingsTable />
                <ActionBar />
            </main>
            <StatusBar />
            <Taskbar />
        </div>
    );
}
